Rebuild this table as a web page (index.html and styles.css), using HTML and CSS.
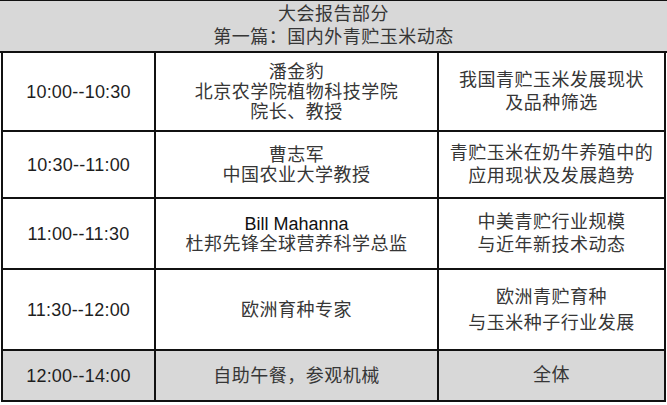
FILE: index.html
```html
<!DOCTYPE html>
<html lang="zh-CN">
<head>
<meta charset="utf-8">
<title>大会报告部分</title>
<link rel="stylesheet" href="styles.css">
</head>
<body>
<div class="sheet">
  <div class="banner">
    <div>大会报告部分</div>
    <div>第一篇：国内外青贮玉米动态</div>
  </div>
  <table class="agenda">
    <colgroup>
      <col class="c-time">
      <col class="c-who">
      <col class="c-topic">
    </colgroup>
    <tr class="r1">
      <td class="time">10:00--10:30</td>
      <td class="who">潘金豹<br>北京农学院植物科技学院<br>院长、教授</td>
      <td class="topic">我国青贮玉米发展现状<br>及品种筛选</td>
    </tr>
    <tr class="r2">
      <td class="time">10:30--11:00</td>
      <td class="who">曹志军<br>中国农业大学教授</td>
      <td class="topic">青贮玉米在奶牛养殖中的<br>应用现状及发展趋势</td>
    </tr>
    <tr class="r3">
      <td class="time">11:00--11:30</td>
      <td class="who"><span class="latin">Bill Mahanna</span><br>杜邦先锋全球营养科学总监</td>
      <td class="topic">中美青贮行业规模<br>与近年新技术动态</td>
    </tr>
    <tr class="r4">
      <td class="time">11:30--12:00</td>
      <td class="who">欧洲育种专家</td>
      <td class="topic wide">欧洲青贮育种<br>与玉米种子行业发展</td>
    </tr>
    <tr class="r5 shaded">
      <td class="time">12:00--14:00</td>
      <td class="who">自助午餐，参观机械</td>
      <td class="topic">全体</td>
    </tr>
  </table>
</div>
</body>
</html>
```

FILE: styles.css
```css
html, body {
  margin: 0;
  padding: 0;
  background: #ffffff;
}

.sheet {
  width: 667px;
  font-family: "Liberation Sans", "Noto Sans CJK SC", sans-serif;
  color: #363636;
}

.banner {
  background: #d8d8d8;
  border-top: 1px solid #111;
  border-bottom: 2px solid #111;
  height: 50px;
  display: flex;
  flex-direction: column;
  justify-content: center;
  align-items: center;
  font-size: 18px;
  line-height: 23px;
  letter-spacing: 0.5px;
}

.agenda {
  margin-left: 1px;
  width: 665px;
  table-layout: fixed;
  border-collapse: collapse;
  border-top: hidden;
}

.c-time { width: 153px; }
.c-who { width: 283px; }
.c-topic { width: 227px; }

.agenda td {
  border: 2px solid #111;
  padding: 0;
  text-align: center;
  vertical-align: middle;
  font-size: 18px;
  line-height: 20px;
  letter-spacing: 0.5px;
}

.agenda td.time {
  color: #1e1e1e;
  letter-spacing: 0.2px;
}

.agenda td.topic {
  line-height: 23px;
}

.agenda td.topic.wide {
  line-height: 26px;
}

.latin {
  color: #111;
  letter-spacing: 0;
}

.r1 { height: 78px; }
.r2 { height: 67px; }
.r3 { height: 71px; }
.r4 { height: 81px; }
.r5 { height: 51px; }

.shaded td {
  background: #d8d8d8;
}
```
